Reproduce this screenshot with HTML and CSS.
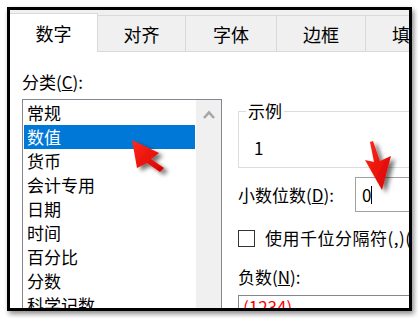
FILE: index.html
```html
<!DOCTYPE html>
<html lang="zh-CN">
<head>
<meta charset="utf-8">
<title>设置单元格格式</title>
<link rel="stylesheet" href="styles.css">
</head>
<body>
<div class="frame">
  <div class="tabs">
    <div class="tab active">数字</div>
    <div class="tab">对齐</div>
    <div class="tab w91">字体</div>
    <div class="tab w89">边框</div>
    <div class="tab w89">填充</div>
  </div>
  <div class="content">
    <div class="left">
      <div class="label">分类(<u>C</u>):</div>
      <div class="listbox">
        <div class="items">
          <div class="item">常规</div>
          <div class="item selected">数值</div>
          <div class="item">货币</div>
          <div class="item">会计专用</div>
          <div class="item">日期</div>
          <div class="item">时间</div>
          <div class="item">百分比</div>
          <div class="item">分数</div>
          <div class="item">科学记数</div>
        </div>
        <div class="scrollbar">
          <svg class="chev" width="12" height="9" viewBox="0 0 12 9"><path d="M1 8 L6 2.5 L11 8" fill="none" stroke="#a6a6a6" stroke-width="2.6"/></svg>
        </div>
      </div>
    </div>
    <div class="right">
      <div class="sample">
        <div class="sample-title">示例</div>
        <div class="sample-value">1</div>
      </div>
      <div class="row decimals">
        <div class="row-label">小数位数(<u>D</u>):</div>
        <div class="input"><span class="val">0</span><span class="caret"></span></div>
      </div>
      <div class="row check">
        <span class="box"></span>
        <span class="check-text">使用千位分隔符(,)(U)</span>
      </div>
      <div class="label neg-label">负数(<u>N</u>):</div>
      <div class="neglist">
        <div class="neg-item">(1234)</div>
      </div>
    </div>
  </div>
</div>
<svg class="overlay" width="418" height="318" viewBox="0 0 418 318">
  <defs>
    <filter id="sh" x="-50%" y="-50%" width="200%" height="200%">
      <feDropShadow dx="4" dy="3" stdDeviation="2.2" flood-color="#000" flood-opacity="0.55"/>
    </filter>
    <linearGradient id="rg" x1="0" y1="0" x2="1" y2="1">
      <stop offset="0" stop-color="#ff2a1a"/>
      <stop offset="1" stop-color="#d80000"/>
    </linearGradient>
  </defs>
  <polygon filter="url(#sh)" fill="url(#rg)" points="132,140 159,153 151,159 164,168 160,172 147,163 137,168"/>
  <polygon filter="url(#sh)" fill="url(#rg)" points="382,190 365,160 374,162 370,142 373,141 380,161 391,156"/>
</svg>
</body>
</html>
```

FILE: styles.css
```css
html, body {
  margin: 0;
  padding: 0;
  background: #fff;
}
body {
  width: 418px;
  height: 318px;
  overflow: hidden;
  position: relative;
  font-family: "Noto Sans CJK SC", "Microsoft YaHei", sans-serif;
  color: #000;
  font-size: 17px;
}
.frame {
  margin: 7px 0 0 7px;
  width: 405px;
  height: 304px;
  box-sizing: border-box;
  border: 3px solid #000;
  box-shadow: 2px 3px 5px rgba(0, 0, 0, 0.45);
  overflow: hidden;
  background: #fff;
}
.tabs {
  display: flex;
  align-items: flex-end;
  height: 42px;
  box-sizing: border-box;
  background: #f0f0f0;
  border-bottom: 1px solid #d9d9d9;
}
.tab {
  flex: none;
  width: 88px;
  height: 36px;
  box-sizing: border-box;
  border-top: 1px solid #d9d9d9;
  border-right: 1px solid #d9d9d9;
  display: flex;
  align-items: center;
  justify-content: center;
  font-size: 18px;
  line-height: 24px;
  white-space: nowrap;
}
.tab.w91 { width: 91px; }
.tab.w89 { width: 89px; }
.tab.active {
  height: 39px;
  margin-bottom: -1px;
  background: #fff;
}
.content {
  display: flex;
  gap: 16px;
  padding-left: 12px;
}
.left {
  flex: none;
  width: 200px;
}
.label {
  line-height: 24px;
  height: 24px;
  white-space: nowrap;
}
.left .label {
  margin-top: 18px;
  margin-bottom: 5px;
}
.listbox {
  display: flex;
  height: 240px;
  box-sizing: border-box;
  border: 1px solid #828790;
  padding: 1px 0 0 1px;
}
.items {
  flex: none;
  width: 171px;
  margin-right: 1px;
}
.item {
  height: 24px;
  line-height: 24px;
  padding-left: 3px;
  white-space: nowrap;
}
.item.selected {
  background: #0078d7;
  color: #fff;
}
.scrollbar {
  flex: 1;
  margin-top: -1px;
  background: #f0f0f0;
  display: flex;
  justify-content: center;
  align-items: flex-start;
}
.chev {
  display: block;
  margin-top: 10px;
}
.right {
  flex: none;
  width: 260px;
  padding-top: 59px;
}
.sample {
  border: 1px solid #dcdcdc;
  padding: 0 0 7px 0;
}
.sample-title {
  width: fit-content;
  margin: -13px 0 0 7px;
  padding: 0 2px;
  background: #fff;
  line-height: 24px;
}
.sample-value {
  margin-top: 13px;
  padding-left: 15px;
  line-height: 24px;
}
.row {
  display: flex;
  align-items: center;
}
.decimals {
  margin-top: 9px;
  height: 35px;
}
.row-label {
  flex: none;
  width: 117px;
  line-height: 24px;
  white-space: nowrap;
}
.input {
  flex: 1;
  height: 35px;
  box-sizing: border-box;
  border: 1px solid #a0a0a0;
  display: flex;
  align-items: center;
  padding-left: 6px;
}
.val {
  line-height: 24px;
}
.caret {
  width: 1px;
  height: 18px;
  background: #000;
}
.check {
  margin-top: 14px;
  height: 24px;
  white-space: nowrap;
}
.box {
  flex: none;
  width: 17px;
  height: 17px;
  box-sizing: border-box;
  border: 1px solid #333;
  background: #fff;
}
.check-text {
  margin-left: 10px;
  line-height: 24px;
  letter-spacing: 0.5px;
}
.neg-label {
  margin-top: 15px;
}
.neglist {
  margin-top: 6px;
  height: 60px;
  box-sizing: border-box;
  border: 1px solid #828790;
  padding: 0 0 0 4px;
}
.neg-item {
  color: #ff0000;
  line-height: 24px;
  margin-top: -1px;
}
.overlay {
  position: absolute;
  left: 0;
  top: 0;
  pointer-events: none;
}
```
